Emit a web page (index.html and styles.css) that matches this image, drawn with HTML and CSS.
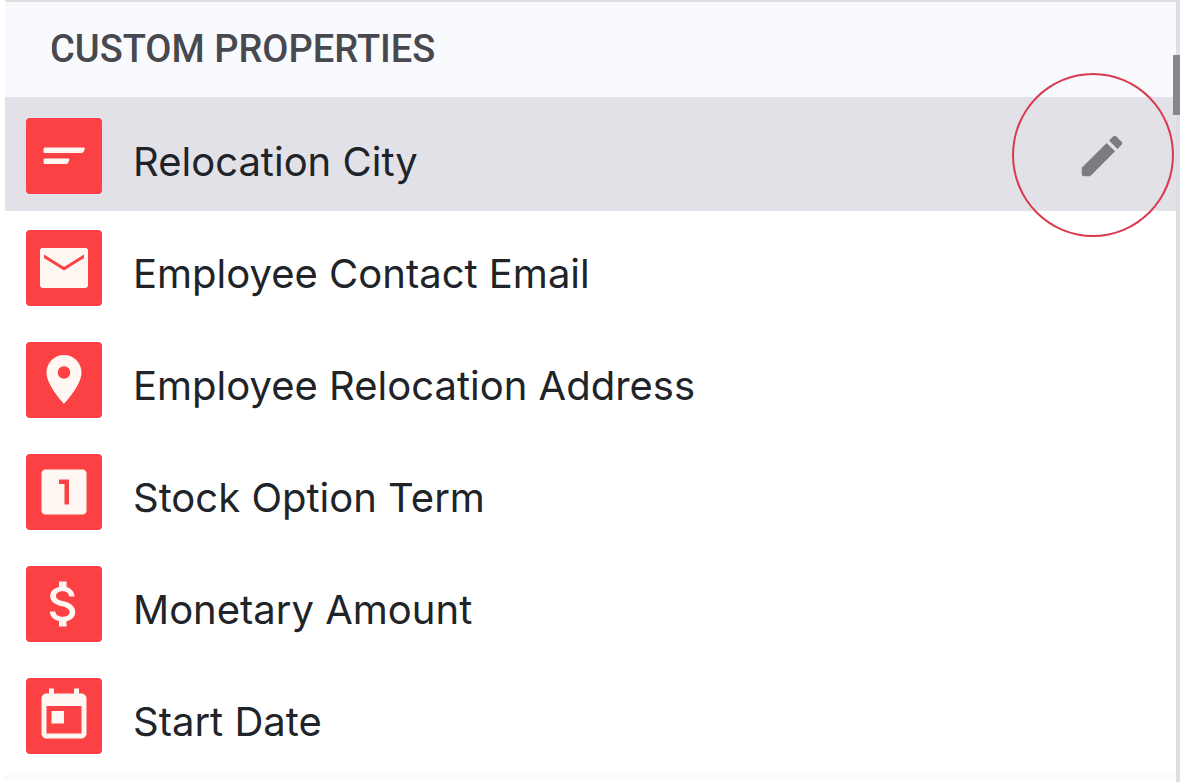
FILE: index.html
```
<!DOCTYPE html>
<html lang="en">
  <head>
    <meta charset="UTF-8" />
    <meta name="viewport" content="width=device-width, initial-scale=1.0" />
    <title>Custom Properties</title>
    <link rel="stylesheet" href="styles.css">
  </head>
  <body>
    <section class="panel">
      <h2 class="panel-title">CUSTOM PROPERTIES</h2>

      <ul class="property-list">
        <li class="property active">
          <span class="tile">
            <svg viewBox="0 0 24 24"><path d="M4.300 8.600h15.600q.6 0 .4.6l-.4 1q-.3.6-.9.6H4.300q-.5 0-.5-.6v-1q0-.6.5-.6zM4.300 13h9.400q.6 0 .4.600l-.4 1q-.2.600-.8.600H4.300q-.5 0-.5-.6v-1q0-.6.5-.6z" /></svg>
          </span>
          <span class="label">Relocation City</span>
          <button class="edit" type="button" aria-label="Edit Relocation City">
            <svg viewBox="0 0 24 24"><path d="M3 17.25V20q0 1 1 1h2.75L17.81 9.94l-3.75-3.75L3 17.25zM20.71 7.04c.39-.39.39-1.02 0-1.41l-2.34-2.34c-.39-.39-1.02-.39-1.41 0l-1.83 1.83 3.75 3.75 1.83-1.83z" /></svg>
          </button>
          <span class="ring"></span>
        </li>
        <li class="property">
          <span class="tile">
            <svg viewBox="0 0 24 24"><path d="M20.600 4H3.400c-.6 0-1 .4-1 1v13.800c0 .7.5 1.200 1.200 1.200h16.800c.7 0 1.200-.5 1.200-1.200V5c0-.6-.4-1-1-1zM20 8l-8 5-8-5V6.600l8 5 8-5V8z" /></svg>
          </span>
          <span class="label">Employee Contact Email</span>
        </li>
        <li class="property">
          <span class="tile">
            <svg viewBox="0 0 24 24"><path d="M12 2C8.130 2 5 5.130 5 9c0 5.250 7 12.500 7 12.500s7-7.250 7-12.500c0-3.870-3.130-7-7-7zm0 9.500a2.500 2.500 0 0 1 0-5 2.500 2.500 0 0 1 0 5z" /></svg>
          </span>
          <span class="label">Employee Relocation Address</span>
        </li>
        <li class="property">
          <span class="tile">
            <svg viewBox="0 0 24 24"><path d="M19.500 3h-15C3.700 3 3 3.700 3 4.500v15c0 .8.7 1.500 1.500 1.500h15c.8 0 1.500-.7 1.500-1.500v-15c0-.8-.7-1.500-1.500-1.500zM14 17h-1.800V8.800H10V7h4v10z" /></svg>
          </span>
          <span class="label">Stock Option Term</span>
        </li>
        <li class="property">
          <span class="tile">
            <svg viewBox="0 0 24 24"><path d="M11.800 10.900c-2.270-.59-3-1.200-3-2.150 0-1.090 1.010-1.850 2.700-1.850 1.780 0 2.440.85 2.500 2.100h2.210c-.07-1.720-1.120-3.300-3.210-3.810V3h-3v2.160c-1.940.42-3.500 1.680-3.500 3.610 0 2.310 1.910 3.460 4.700 4.130 2.500.6 3 1.480 3 2.410 0 .69-.49 1.790-2.700 1.790-2.060 0-2.870-.92-2.980-2.100h-2.200c.12 2.190 1.760 3.420 3.680 3.830V21h3v-2.150c1.950-.37 3.500-1.500 3.500-3.550 0-2.840-2.430-3.810-4.700-4.400z" /></svg>
          </span>
          <span class="label">Monetary Amount</span>
        </li>
        <li class="property">
          <span class="tile">
            <svg viewBox="0 0 24 24"><path d="M19 3h-1V1h-2v2H8V1H6v2H5c-1.110 0-1.990.9-1.990 2L3 19c0 1.100.89 2 2 2h14c1.100 0 2-.9 2-2V5c0-1.100-.9-2-2-2zm0 16H5V8h14v11zM7 10h5v5H7z" /></svg>
          </span>
          <span class="label">Start Date</span>
        </li>
      </ul>

      <span class="scroll-thumb"></span>
    </section>
  </body>
</html>
```

FILE: styles.css
```
* {
  box-sizing: border-box;
}

body {
  margin: 0;
  background-color: #fff;
  color: #202328;
  font-family: Inter, "Liberation Sans", sans-serif;
}

.panel {
  position: relative;
  min-height: 100vh;
  margin-left: 5px;
  border-top: 2px solid #e0e0e3;
  border-right: 4px solid #dfdfe3;
}

.panel-title {
  margin: 0;
  padding: 24px 45px 25px;
  background-color: #f9fafd;
  color: #48494f;
  font-family: Roboto, sans-serif;
  font-size: 38px;
  font-weight: 500;
  line-height: 46px;
}

.property-list {
  margin: 0;
  padding: 0 0 4px;
  border-bottom: 4px solid #f9fafc;
  list-style: none;
}

.property {
  position: relative;
  display: flex;
  align-items: center;
  padding: 19px 47px 17px 21px;
}

.property.active {
  padding-top: 21px;
  background-color: #e2e1e8;
}

.tile {
  display: flex;
  align-items: center;
  justify-content: center;
  width: 76px;
  height: 76px;
  border-radius: 4px;
  background-color: #fc4145;
}

.tile svg {
  width: 60px;
  height: 60px;
  fill: #fff8f2;
}

.label {
  flex: 1;
  padding-top: 12px;
  margin-left: 31px;
  font-size: 40px;
  line-height: 48px;
}

.edit {
  padding: 0;
  border: none;
  background: none;
  cursor: pointer;
}

.edit svg {
  display: block;
  width: 54px;
  height: 54px;
  fill: #7b7d83;
}

/* circle that calls out the edit button */
.ring {
  position: absolute;
  top: -24px;
  right: 2px;
  z-index: 1;
  width: 162px;
  height: 164px;
  border: 2px solid #d93a4e;
  border-radius: 50%;
  pointer-events: none;
}

.scroll-thumb {
  position: absolute;
  top: 53px;
  right: -4px;
  width: 7px;
  height: 60px;
  background-color: #88868b;
}
```
